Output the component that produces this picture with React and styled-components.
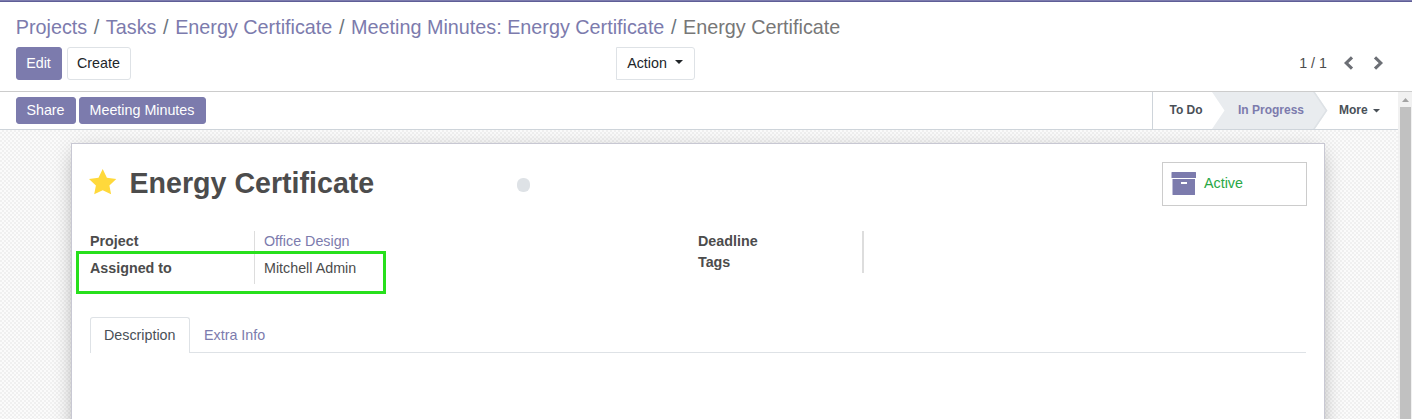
import React from 'react';
import styled, { createGlobalStyle, css } from 'styled-components';

const purple = '#7c7bad';
const line = '#dee2e6';

const Global = createGlobalStyle`
  * { box-sizing: border-box; }
  html, body { margin: 0; height: 100%; overflow: hidden; background: #fff; }
  body { font: 14.3px/21px "Liberation Sans", Arial, sans-serif; color: #4c4c4c; }
  button { font: inherit; margin: 0; cursor: pointer; }
`;

const Page = styled.div`
  height: 419px;
  display: flex;
  flex-direction: column;
  overflow: hidden;
`;

const Navbar = styled.div`
  height: 2px;
  flex: none;
  background: ${purple};
  border-bottom: 1px solid #5f5e97;
`;

const ControlPanel = styled.header`
  flex: none;
  height: 90px;
  padding: 10px 16px 0;
  border-bottom: 1px solid #ccc;
`;

const Breadcrumb = styled.ol`
  display: flex;
  margin: 0 0 0 -0.3px;
  padding: 0;
  height: 35px;
  list-style: none;
  font-size: 19.8px;
  line-height: 30px;
  white-space: nowrap;
`;

const Crumb = styled.li`
  color: ${p => (p.$current ? '#777' : purple)};
  &:not(:first-child)::before { content: '/'; color: #6c757d; padding: 0 6.6px; }
`;

const PanelRow = styled.div`
  display: grid;
  grid-template-columns: 600px 1fr auto;
  align-items: center;
`;

const Group = styled.div`
  display: flex;
  gap: ${p => p.$gap || 0}px;
`;

const Button = styled.button`
  height: ${p => (p.$small ? 27 : 33)}px;
  width: ${p => p.$w}px;
  padding: 0 1px 1px 0;
  display: inline-flex;
  align-items: center;
  justify-content: center;
  white-space: nowrap;
  border-radius: ${p => (p.$flatLeft ? '0 3px 3px 0' : '3px')};
  border: 1px solid ${p => (p.$primary ? purple : line)};
  background: ${p => (p.$primary ? purple : '#fff')};
  color: ${p => (p.$primary ? '#fff' : '#212529')};
`;

const CaretIcon = styled.svg`
  width: ${p => p.$size}px;
  height: ${p => p.$size / 2}px;
  margin-left: ${p => p.$gap}px;
  margin-top: ${p => p.$top}px;
  fill: currentColor;
`;

const Pager = styled.div`
  display: flex;
  align-items: center;
  padding-right: 12px;
  svg { margin-top: -2px; }
  svg:first-of-type { margin-left: 16px; }
  svg + svg { margin-left: 19px; }
`;

const Main = styled.main`
  flex: 1;
  min-height: 0;
  display: flex;
`;

const Content = styled.div`
  flex: 1;
  display: flex;
  flex-direction: column;
`;

const StatusBar = styled.div`
  flex: none;
  height: 38px;
  display: flex;
  justify-content: space-between;
  padding-left: 16px;
  border-bottom: 1px solid #ced4da;
  background: #fff;
  ${Group} { align-items: center; }
`;

const Stages = styled.div`
  display: flex;
  width: 246px;
  border-left: 1px solid #ced4da;
  font-size: 12px;
  font-weight: bold;
  line-height: 35px;
`;

const Stage = styled.div`
  display: flex;
  align-items: center;
  height: 37px;
  padding-bottom: 1px;
  color: #495057;
  ${p => p.$kind === 'first' && css`width: 59px; padding-left: 16.500px;`}
  ${p => p.$kind === 'more' && css`padding-left: 11px;`}
  ${p => p.$kind === 'active' && css`
    position: relative;
    width: 116px;
    padding-left: 26px;
    color: ${purple};
    background: #e9ecef;
    clip-path: polygon(0 0, 103px 0, 115.500px 50%, 103px 100%, 0 100%, 12.500px 50%);
    &::after {
      content: '';
      position: absolute;
      inset: 0;
      background: ${line};
      clip-path: polygon(101px 0, 103px 0, 115.500px 50%, 103px 100%, 101px 100%, 113.500px 50%);
    }
  `}
`;

const Canvas = styled.div`
  flex: 1;
  min-height: 0;
  overflow: hidden;
  padding: 13px 73px 0 71px;
  background: repeating-conic-gradient(#f0f0f0 0 25%, #fbfbfb 0 50%) 0 0 / 4px 4px;
`;

const Sheet = styled.section`
  height: 400px;
  padding: 18px 17px 0 18px;
  background: #fff;
  border: 1px solid #c8c8d3;
  box-shadow: 0 5px 20px -5px rgba(0, 0, 0, 0.4);
`;

const SheetHead = styled.div`
  display: flex;
  height: 69px;
`;

const Title = styled.h1`
  margin: 0 0 0 12.500px;
  width: 387.500px;
  font-size: 28.6px;
  line-height: 42px;
  color: #4c4c4c;
`;

const Star = styled.svg`
  width: 28px;
  height: 26px;
  margin-top: 7px;
  margin-left: -1px;
  fill: #ffd93b;
`;

const StateDot = styled.span`
  width: 13px;
  height: 14px;
  margin-top: 16px;
  border-radius: 6px;
  background: ${line};
`;

const StatButton = styled.button`
  margin-left: auto;
  width: 145px;
  height: 44px;
  display: flex;
  align-items: center;
  gap: 7px;
  padding: 0 8px 2px;
  border: 1px solid #ccc;
  background: #fff;
  color: #28a745;
`;

const Fields = styled.div`
  display: grid;
  grid-template-columns: 608px 1fr;
  height: 86px;
  align-items: start;
`;

const FieldGroup = styled.dl`
  margin: 0;
`;

const Field = styled.div`
  display: grid;
  grid-template-columns: 164px 1fr;
  height: ${p => p.$h}px;
  dt { font-weight: bold; }
  dd {
    margin: 0;
    padding-left: 9px;
    border-left: ${p => p.$bar || 1}px solid #ddd;
    color: ${p => (p.$link ? purple : '#4c4c4c')};
  }
  dt, dd { padding-top: ${p => p.$top || 0}px; }
`;

const AssignedRow = styled.div`
  position: relative;
`;

const Highlight = styled.div`
  position: absolute;
  left: -14px;
  top: -6px;
  width: 310px;
  height: 43px;
  border: 3px solid #28e01c;
`;

const Tabs = styled.nav`
  display: flex;
  height: 36px;
  margin-right: 1px;
  border-bottom: 1px solid ${line};
`;

const Tab = styled.a`
  height: 36px;
  width: ${p => p.$w}px;
  padding: 7px 13px;
  white-space: nowrap;
  border: 1px solid ${p => (p.$active ? line : 'transparent')};
  border-bottom: 0;
  border-radius: 3px 3px 0 0;
  background: ${p => (p.$active ? '#fff' : 'transparent')};
  color: ${p => (p.$active ? '#495057' : purple)};
`;

const Scrollbar = styled.div`
  width: 14px;
  display: flex;
  flex-direction: column;
  align-items: center;
  background: #f1f1f1;
  svg { display: block; width: 14px; height: 15px; flex: none; }
`;

const Thumb = styled.div`
  width: 11px;
  margin-left: 1px;
  flex: 1;
  background: #c1c1c1;
`;

const crumbs = ['Projects', 'Tasks', 'Energy Certificate', 'Meeting Minutes: Energy Certificate', 'Energy Certificate'];

const Chevron = ({ d }) => (
  <svg width="11" height="14" viewBox="0 0 11 14" fill="none" stroke="#6c6f75" strokeWidth="3.1">
    <path d={d} />
  </svg>
);

const Caret = ({ gap, size, top }) => (
  <CaretIcon viewBox="0 0 8 4" $gap={gap} $size={size} $top={top}><path d="M0 0h8L4 4z" /></CaretIcon>
);

export default function App() {
  return (
    <Page>
      <Global />
      <Navbar />
      <ControlPanel>
        <Breadcrumb>
          {crumbs.map((c, i) => <Crumb key={i} $current={i === crumbs.length - 1}>{c}</Crumb>)}
        </Breadcrumb>
        <PanelRow>
          <Group $gap={5}>
            <Button $primary $w={46}>Edit</Button>
            <Button $w={64}>Create</Button>
          </Group>
          <Group>
            <Button $w={79} $flatLeft>Action<Caret gap={8} size={8} top={-2} /></Button>
          </Group>
          <Pager>
            1 / 1
            <Chevron d="M9 1.300 3.200 7 9 12.700" />
            <Chevron d="M2 1.300 7.800 7 2 12.700" />
          </Pager>
        </PanelRow>
      </ControlPanel>
      <Main>
        <Content>
          <StatusBar>
            <Group $gap={3}>
              <Button $primary $small $w={60}>Share</Button>
              <Button $primary $small $w={127}>Meeting Minutes</Button>
            </Group>
            <Stages>
              <Stage $kind="first">To Do</Stage>
              <Stage $kind="active">In Progress</Stage>
              <Stage $kind="more">More<Caret gap={5} size={7} top={2} /></Stage>
            </Stages>
          </StatusBar>
          <Canvas>
            <Sheet>
              <SheetHead>
                <Star viewBox="0 0 28 26">
                  <path d="M13.700 0 17.900 8.700 27.300 10 20.400 16.500 22.100 25.300 13.700 21.300 5.200 25.300 6.900 16.500 0 10 9.500 8.700z" />
                </Star>
                <Title>Energy Certificate</Title>
                <StateDot />
                <StatButton>
                  <svg width="26" height="23" viewBox="0 0 26 23" fill={purple}>
                    <path d="M.5.500Q.5 0 1 0h23.500q.5 0 .5.500V6H.500zM1.500 7H24v15.500q0 .5-.5.500H2q-.5 0-.5-.5zM10 10v2h6v-2z" fillRule="evenodd" />
                  </svg>
                  Active
                </StatButton>
              </SheetHead>
              <Fields>
                <FieldGroup>
                  <Field $h={26} $link><dt>Project</dt><dd>Office Design</dd></Field>
                  <AssignedRow>
                    <Field $h={27} $top={1}><dt>Assigned to</dt><dd>Mitchell Admin</dd></Field>
                    <Highlight />
                  </AssignedRow>
                </FieldGroup>
                <FieldGroup>
                  <Field $h={21} $bar={2}><dt>Deadline</dt><dd /></Field>
                  <Field $h={21} $bar={2}><dt>Tags</dt><dd /></Field>
                </FieldGroup>
              </Fields>
              <Tabs>
                <Tab $active $w={100}>Description</Tab>
                <Tab $w={90}>Extra Info</Tab>
              </Tabs>
            </Sheet>
          </Canvas>
        </Content>
        <Scrollbar>
          <svg viewBox="0 0 14 15"><path d="M4 10h7L7.500 6z" fill="#a3a3a3" /></svg>
          <Thumb />
        </Scrollbar>
      </Main>
    </Page>
  );
}
